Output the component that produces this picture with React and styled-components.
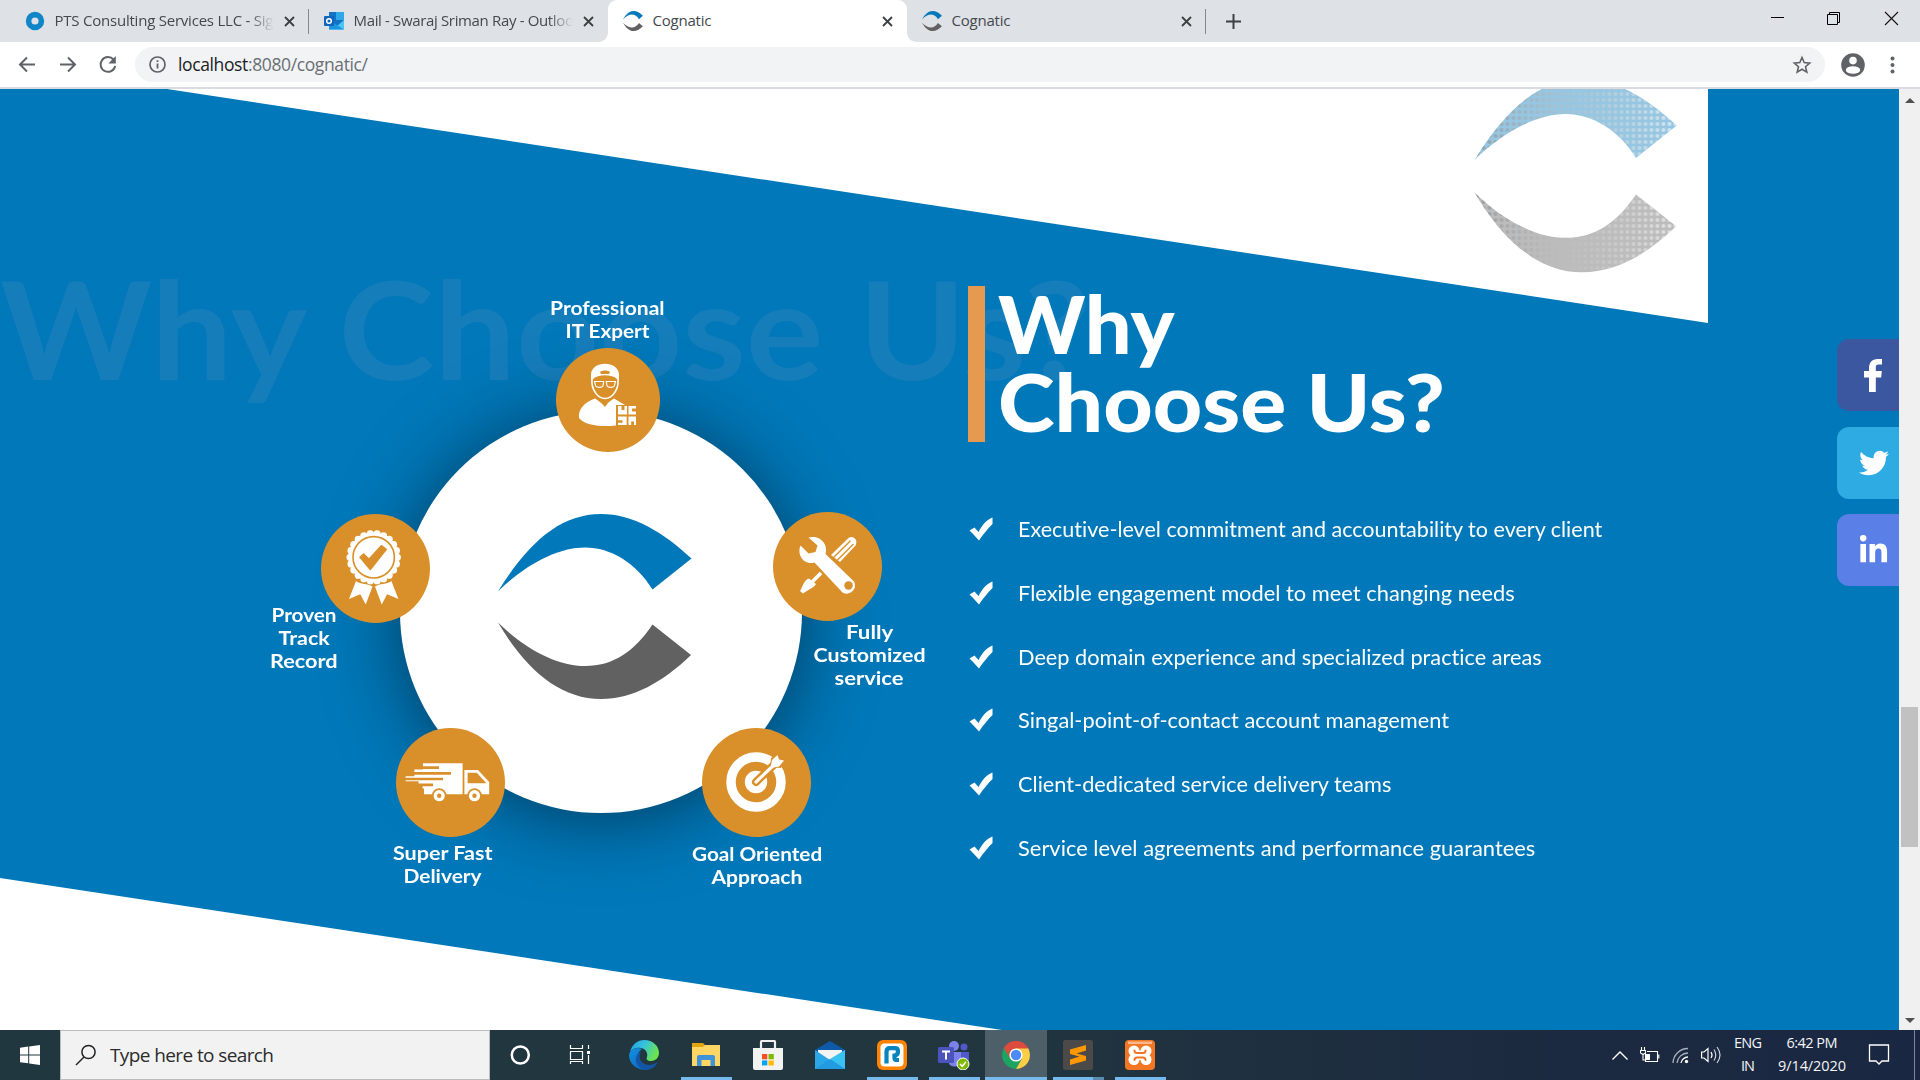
import React, { useLayoutEffect, useRef, useState } from 'react';
import styled, { createGlobalStyle } from 'styled-components';
import { FaTwitter, FaLinkedinIn } from 'react-icons/fa';

const UI = '"Open Sans", "Noto Sans", sans-serif';
const BRAND = 'Lato, "Open Sans", sans-serif';
const BLUE = '#0078b9';
const ORANGE = '#d9902a';

const Global = createGlobalStyle`
  * { box-sizing: border-box; }
  html, body { margin: 0; overflow: hidden; background: #fff; }
  svg { display: block; flex: none; }
`;

/* ---------- text set to a given measure ---------- */
const Line = styled.span`
  display: inline-block;
  white-space: nowrap;
`;

function Fit({ w, children }) {
  const ref = useRef(null);
  const [spacing, setSpacing] = useState(0);
  useLayoutEffect(() => {
    const natural = ref.current.getBoundingClientRect().width;
    setSpacing((w - natural) / (ref.current.textContent.length - 1));
  }, [w]);
  return (
    <Line ref={ref} style={{ letterSpacing: spacing, marginRight: -spacing }}>
      {children}
    </Line>
  );
}

/* brand lettering is drawn extended: the glyphs widen, not the gaps */
const WideLine = styled(Line)`
  transform-origin: ${(p) => (p.$centered ? '50%' : '0')} 50%;
  font-variant-ligatures: none;
`;

function Wide({ w, centered, children }) {
  const ref = useRef(null);
  const [scale, setScale] = useState(1);
  useLayoutEffect(() => {
    setScale(w / ref.current.offsetWidth);
  }, [w]);
  return (
    <WideLine ref={ref} $centered={centered} style={{ transform: `scaleX(${scale})` }}>
      {children}
    </WideLine>
  );
}

/* ---------- shell ---------- */
const Screen = styled.div`
  width: 1920px;
  height: 1080px;
  display: flex;
  flex-direction: column;
  overflow: hidden;
  font-family: ${UI};
`;

/* ---------- tab strip ---------- */
const TabStrip = styled.div`
  height: 42px;
  flex: none;
  display: flex;
  padding-left: 10px;
  background: #dee1e6;
`;

const Tab = styled.div`
  position: relative;
  width: 299px;
  height: 42px;
  display: flex;
  align-items: center;
  padding: 0 14px 0 15px;
  border-radius: 9px 9px 0 0;
  background: ${(p) => (p.$active ? '#fff' : 'transparent')};
  &::before, &::after {
    content: '';
    display: ${(p) => (p.$active ? 'block' : 'none')};
    position: absolute;
    bottom: 0;
    width: 9px;
    height: 9px;
  }
  &::before { left: -9px; background: radial-gradient(circle at 0 0, transparent 8.5px, #fff 9px); }
  &::after { right: -9px; background: radial-gradient(circle at 100% 0, transparent 8.5px, #fff 9px); }
`;

const TabTitle = styled.div`
  flex: 1;
  height: 24px;
  margin: 0 8px 0 9.5px;
  line-height: 23px;
  font-size: 15px;
  color: #45494d;
  overflow: hidden;
  white-space: nowrap;
  ${(p) => p.$fade && 'mask-image: linear-gradient(90deg, #000 88%, transparent 99%);'}
`;

const TabDivider = styled.div`
  width: 1px;
  height: 25px;
  margin: 9px 0 0 -1px;
  background: #85888c;
`;

const NewTab = styled.div`
  margin: 14px 0 0 20px;
`;

const WindowControls = styled.div`
  display: flex;
  gap: 42px;
  margin: 11px 21px 0 auto;
`;

/* ---------- toolbar ---------- */
const Toolbar = styled.div`
  height: 47px;
  flex: none;
  display: flex;
  align-items: center;
  padding: 0 21px 0 17px;
  background: #fff;
  border-bottom: 2px solid #d9dbe1;
`;

const NavButtons = styled.div`
  display: flex;
  gap: 19px;
  width: 118px;
`;

const Omnibox = styled.div`
  width: 1690px;
  height: 35px;
  display: flex;
  align-items: center;
  padding: 0 13px 0 13px;
  border-radius: 18px;
  background: #f1f3f4;
`;

const Address = styled.div`
  flex: 1;
  margin-left: 11px;
  font-size: 17.5px;
  line-height: 33px;
  padding-bottom: 1px;
  color: #202124;
`;

const AddressRest = styled.span`
  color: #6b6f74;
`;

const ToolbarEnd = styled.div`
  display: flex;
  align-items: center;
  gap: 25.5px;
  margin-left: 15.5px;
`;

/* ---------- page ---------- */
const Viewport = styled.div`
  height: 941px;
  flex: none;
  display: flex;
`;

const Page = styled.main`
  position: relative;
  width: 1899px;
  height: 941px;
  display: flex;
  overflow: hidden;
  background: ${BLUE};
  font-family: ${BRAND};
  color: #fff;
`;

const Backdrop = styled.svg`
  position: absolute;
  left: 0;
  top: 0;
`;

const Watermark = styled.div`
  position: absolute;
  left: 0;
  top: 159px;
  font-size: 136px;
  font-weight: 700;
  line-height: 160px;
  color: #167dbb;
`;

const Diagram = styled.div`
  position: relative;
  width: 968px;
  flex: none;
`;

const Ring = styled.div`
  position: absolute;
  left: 400px;
  top: 322px;
  width: 402px;
  height: 402px;
  display: flex;
  padding: 102.5px 0 0 98px;
  border-radius: 50%;
  background: #fff;
  box-shadow: 0 6px 74px rgba(0, 0, 0, 0.5);
`;

const Node = styled.div`
  position: absolute;
  left: ${(p) => p.$x}px;
  top: ${(p) => p.$y}px;
  width: ${(p) => p.$size}px;
  height: ${(p) => p.$size}px;
  border-radius: 50%;
  background: ${ORANGE};
`;

const NodeLabel = styled.div`
  position: absolute;
  left: ${(p) => p.$cx - 80}px;
  top: ${(p) => p.$y}px;
  width: 160px;
  display: flex;
  flex-direction: column;
  align-items: center;
  font-size: 18.5px;
  font-weight: 700;
  line-height: 23.3px;
`;

const Content = styled.div`
  position: relative;
  padding-top: 197px;
`;

const Heading = styled.h1`
  display: flex;
  height: 156px;
  margin: 0;
  padding-left: 13px;
  border-left: 17px solid #e69a50;
  font-size: 80px;
  font-weight: 900;
  line-height: 78px;
`;

const HeadingText = styled.div`
  display: flex;
  flex-direction: column;
  align-items: flex-start;
  margin-top: -2px;
`;

const Points = styled.ul`
  margin: 55.5px 0 0;
  padding: 0;
  list-style: none;
`;

const Point = styled.li`
  height: 63.65px;
  display: flex;
  align-items: center;
  gap: 25px;
  padding-left: 1px;
  font-size: 20.5px;
  line-height: 24px;
`;

const Socials = styled.div`
  position: absolute;
  right: 0;
  top: 250px;
  display: flex;
  flex-direction: column;
  gap: 15.5px;
`;

const Social = styled.a`
  width: 62px;
  height: 72px;
  display: flex;
  align-items: center;
  justify-content: center;
  padding: 0 0 0 11px;
  border-radius: 12px 0 0 12px;
  background: ${(p) => p.$color};
  color: #fff;
`;

const Scrollbar = styled.div`
  width: 21px;
  height: 941px;
  display: flex;
  flex-direction: column;
  align-items: center;
  justify-content: space-between;
  padding: 9px 0 7px;
  background: #f0f0f0;
`;

const Thumb = styled.div`
  width: 17px;
  height: 140px;
  margin-top: 432px;
  background: #c1c1c1;
`;

/* ---------- taskbar ---------- */
const Taskbar = styled.div`
  height: 50px;
  flex: none;
  display: flex;
  background: linear-gradient(90deg, #21373f 0%, #21363f 50%, #1c2a40 80%, #1a2742 100%);
`;

const StartButton = styled.div`
  width: 60px;
  display: flex;
  align-items: center;
  justify-content: center;
`;

const SearchBox = styled.div`
  width: 430px;
  display: flex;
  align-items: center;
  gap: 13px;
  padding: 0 0 1px 14px;
  border: 1px solid #bcbcbc;
  background: #f2f2f2;
  font-size: 19px;
  color: #2b2b2b;
`;

const TaskItem = styled.div`
  width: ${(p) => p.$w || 62}px;
  display: flex;
  flex-direction: column;
  align-items: center;
  justify-content: space-between;
  padding-top: 10px;
  background: ${(p) => (p.$active ? '#4d5f68' : 'transparent')};
`;

const Running = styled.div`
  width: ${(p) => (p.$full ? 62 : 51)}px;
  height: 3px;
  background: ${(p) => (p.$stacked ? 'linear-gradient(90deg, #76b9ed 79%, #5c8bb2 79%)' : '#76b9ed')};
`;

const Tray = styled.div`
  display: flex;
  align-items: center;
  margin-left: auto;
  color: #f3f5f7;
  font-size: 14.5px;
`;

const TrayIcons = styled.div`
  display: flex;
  align-items: center;
  gap: 12px;
`;

const TrayText = styled.div`
  display: flex;
  flex-direction: column;
  align-items: center;
  width: ${(p) => p.$w}px;
  line-height: 22.6px;
`;

const Peek = styled.div`
  width: 6px;
  height: 50px;
  margin-left: 24px;
  border-left: 1px solid #7d8590;
`;

/* ---------- drawings ---------- */
const TOP_ARC = 'M0 77.5C30 29 62 0 103 0C135 0 165 18 193.5 44.5L154.5 75.5C138 49 113 33.5 87 33.5C60 33.5 28 50 0 77.5Z';
const LOW_ARC = 'M0 108.5C28 136 60 152 87 152C115 152 136 138 154.5 110.5L193 141C165 168 135 185 103 185C62 185 28 156 0 108.5Z';

const Logo = ({ w = 194, h = 185 }) => (
  <svg width={w} height={h} viewBox="0 0 194 185" preserveAspectRatio="none">
    <path d={TOP_ARC} fill="#0078b9" />
    <path d={LOW_ARC} fill="#616161" />
  </svg>
);

const Close = () => (
  <svg width="11" height="11" viewBox="0 0 11 11">
    <path d="M1 1l9 9M10 1l-9 9" stroke="#3c4043" strokeWidth="1.8" />
  </svg>
);

const PtsIcon = () => (
  <svg width="20" height="20" viewBox="0 0 20 20">
    <circle cx="10" cy="10" r="6.4" fill="none" stroke="#0e86c7" strokeWidth="5.6" />
  </svg>
);

const OutlookIcon = () => (
  <svg width="20" height="20" viewBox="0 0 20 20">
    <path d="M5 1h15v17H5z" fill="#1272c4" />
    <path d="M12 1h8v8h-8z" fill="#2fa7e8" />
    <path d="M5 9l8 6 7-6v9.5H5z" fill="#48c6f4" />
    <path d="M5 9l15 9.5H5z" fill="#1b95df" />
    <rect x="0" y="5" width="10" height="10" rx="1" fill="#0f67bd" />
    <circle cx="5" cy="10" r="2.3" fill="none" stroke="#fff" strokeWidth="1.5" />
  </svg>
);

const FacebookIcon = () => (
  <svg width="20" height="33" viewBox="0 0 20 33">
    <path d="M5 33V18.500H0V12H5V9.500C5 3.500 8 0 13.500 0H18V5.500H14.500C12.300 5.500 11.800 6.500 11.800 8.500V12H17.800L17.200 18.500H11.800V33Z" fill="#fff" />
  </svg>
);

const WorkerIcon = () => (
  <svg width="104" height="104" viewBox="0 0 104 104">
    <path d="M35 33V27C35 12 63 12 63 27V33L61 31C56 26 42 26 37 31Z" fill="#fff" />
    <path d="M44 24c2-2 8-2 10 0l-1 2h-8z" fill={ORANGE} />
    <path d="M36 31C35 42 42 50.5 49 50.5S63 42 62 31" fill="none" stroke="#fff" strokeWidth="1.6" />
    <path d="M38.5 33.5h9.2l-.8 4.5c-1 1.8-6 1.8-7.2 0zM50.3 33.5h9.2l-1.2 4.5c-1.200 1.800-6.200 1.800-7.200 0z" fill="none" stroke="#fff" strokeWidth="1.1" />
    <path d="M39 50.500C42 52 45 55 48.500 58C52 55 55 52 58 50.500C62 53 66 55 69 57H60V77.500C47 79 29 78 23 70C22 62 27 55 39 50.500Z" fill="#fff" />
    <path d="M48 53.500h1.500l2 2-2.600 3.500-2.600-3.500z" fill={ORANGE} />
    <path d="M62 58h3.500v4h3v-4h2.500v8.500h-9zM72.500 58H80v2.500h-4v3h4v3h-7.500zM62 68.500h8.700V77H62v-2.300h4.500v-2.500H62zM72.500 68.500H80V77h-2v-3.500h-2.800V77h-2.700z" fill="#fff" />
  </svg>
);

const scallop = Array.from({ length: 22 }, (_, i) => {
  const a = (i / 22) * Math.PI * 2;
  return [52.7 + Math.cos(a) * 23.6, 43.3 + Math.sin(a) * 23.6];
});

const BadgeIcon = () => (
  <svg width="109" height="109" viewBox="0 0 109 109">
    <path d="M35 67C40 71 46 69 51.500 72.500L44.700 90.500L39.300 80.300L28 85ZM70.400 67C65.400 71 59.400 69 54 72.500L60.700 90.500L66.100 80.300L77.400 85Z" fill="#fff" />
    <g fill="#fff">
      {scallop.map(([x, y], i) => <circle key={i} cx={x} cy={y} r="3.6" />)}
      <circle cx="52.7" cy="43.300" r="24.500" />
    </g>
    <circle cx="52.700" cy="43.300" r="20.700" fill="none" stroke={ORANGE} strokeWidth="1.600" />
    <path d="M39 43.300L42.700 40L48 45.300L60.300 31.700L65.300 35.300L49.300 55.500Z" fill={ORANGE} stroke={ORANGE} strokeWidth="1.500" strokeLinejoin="round" />
  </svg>
);

const ToolsIcon = () => (
  <svg width="109" height="109" viewBox="0 0 109 109">
    <path d="M58 43L75.500 26C80 23 85.500 28 82.500 33.500L67 50Z" fill="#fff" />
    <path d="M60.500 45.500L77.500 28.800M64 48.500L80.500 32" stroke={ORANGE} strokeWidth="1.300" />
    <path d="M48 61L38 71" stroke="#fff" strokeWidth="3.600" />
    <path d="M36 66.500L43 72C41 76 36 77 30 81.500L27 79C29.500 75 31 68 36 66.500Z" fill="#fff" />
    <path d="M35.500 25.500C46 22.500 55.500 31 52.500 42L81 69.500A8.300 8.300 0 0 1 69.500 80.500L41.500 50.500C31 53.500 23.500 43 27.500 33.500L35.500 41.500L42.500 40L44.500 33.500Z" fill="#fff" />
    <circle cx="75.500" cy="73.500" r="4.200" fill={ORANGE} />
  </svg>
);

const TruckIcon = () => (
  <svg width="109" height="109" viewBox="0 0 109 109">
    <path d="M27 35.300H66.600V66.300H28V60.500H26.600V58H22.500V53.300H9.600V48.200H18.400V41.500H27Z" fill="#fff" />
    <path d="M14 39.600H43M8 45.300H55M8 51H47M14 56.800H37" stroke={ORANGE} strokeWidth="2.700" />
    <path d="M8 54.500h14v4H8z" fill={ORANGE} />
    <path d="M68.400 42H82L93.200 54V66.300H68.400Z" fill="#fff" />
    <path d="M71.600 44.700H80.800L90.400 55.300H71.600Z" fill={ORANGE} />
    {[43.200, 78.500].map((x) => (
      <g key={x}>
        <circle cx={x} cy="67.700" r="7.400" fill={ORANGE} />
        <circle cx={x} cy="67.700" r="5.600" fill="#fff" />
        <circle cx={x} cy="67.700" r="2.200" fill={ORANGE} />
      </g>
    ))}
  </svg>
);

const TargetIcon = () => (
  <svg width="109" height="109" viewBox="0 0 109 109">
    <circle cx="54" cy="54" r="25" fill="none" stroke="#fff" strokeWidth="9.500" />
    <circle cx="54" cy="54" r="11.200" fill="#fff" />
    <path d="M54 54L79 30" stroke={ORANGE} strokeWidth="8" strokeLinecap="round" />
    <path d="M68 39L69 30L76 25.500L83 32L79 40Z" fill={ORANGE} />
    <path d="M54 54L76 33" stroke="#fff" strokeWidth="3.200" strokeLinecap="round" />
    <path d="M69 37L70 32L75.500 27L77 31.500L82 32.500L77 38.500L71.500 39.500Z" fill="#fff" />
  </svg>
);

const Tick = () => (
  <svg width="24" height="24" viewBox="0 0 24 24">
    <path d="M0.500 13.500L5.500 10.500L9.500 15C13 8 17.500 3 23.500 0.500V7C18.500 12 14 17.500 10 23.500C7 20 4 17 0.500 13.500Z" fill="#fff" />
  </svg>
);

const Arrow = ({ flip }) => (
  <svg width="21" height="21" viewBox="0 0 21 21">
    <path d={flip ? 'M3 10.500H18M11 3.500L18 10.500L11 17.500' : 'M18 10.500H3M10 3.500L3 10.500L10 17.500'} fill="none" stroke="#5f6368" strokeWidth="2" />
  </svg>
);

/* ---------- data ---------- */
const nodes = [
  { x: 555.7, y: 258.7, size: 104, Icon: WorkerIcon },
  { x: 321.2, y: 424.7, size: 109, Icon: BadgeIcon },
  { x: 772.6, y: 423.4, size: 109, Icon: ToolsIcon },
  { x: 395.6, y: 639, size: 109, Icon: TruckIcon },
  { x: 702, y: 639, size: 109, Icon: TargetIcon },
];

const labels = [
  { cx: 607.5, y: 207.5, lines: [['Professional', 115], ['IT Expert', 84]] },
  { cx: 304, y: 514.5, lines: [['Proven', 65], ['Track', 51], ['Record', 68]] },
  { cx: 869.5, y: 531.5, lines: [['Fully', 47], ['Customized', 112], ['service', 69]] },
  { cx: 442.5, y: 753, lines: [['Super Fast', 99], ['Delivery', 78]] },
  { cx: 757, y: 754, lines: [['Goal Oriented', 130], ['Approach', 91]] },
];

const points = [
  ['Executive-level commitment and accountability to every client', 584],
  ['Flexible engagement model to meet changing needs', 497],
  ['Deep domain experience and specialized practice areas', 524],
  ['Singal-point-of-contact account management', 431],
  ['Client-dedicated service delivery teams', 373],
  ['Service level agreements and performance guarantees', 517],
];

const taskApps = [
  {
    icon: (
      <svg width="30" height="30" viewBox="0 0 30 30">
        <defs>
          <linearGradient id="eg" x1="0" x2="1" y1="0" y2=".4"><stop offset="0" stopColor="#1e9de0" /><stop offset=".5" stopColor="#35c3df" /><stop offset="1" stopColor="#6be34f" /></linearGradient>
          <linearGradient id="eb" x1="0" x2=".8" y1="0" y2="1"><stop offset="0" stopColor="#1591e0" /><stop offset="1" stopColor="#0a66bd" /></linearGradient>
        </defs>
        <path d="M1 12C3 4 9 0 15 0C24 0 30 6 30 13C30 18 26 21 22 21C18 21 17 19 18 17C19 13 17 9 12 8C7 7 3 9 1 12Z" fill="url(#eg)" />
        <path d="M1 12C4 8 9 7 13 9C10 11 8 15 9 19C10 24 14 28 20 29C10 32 0 25 0 15Z" fill="url(#eb)" />
        <path d="M12 12C9 16 11 24 19 25C23 25 27 23 29 22C26 28 21 30 17 30C11 29 6 24 7 18C7.500 15 9 13 12 12Z" fill="#1354a3" />
      </svg>
    ),
  },
  {
    run: true,
    icon: (
      <svg width="28" height="28" viewBox="0 0 28 28">
        <path d="M0 3H11L14 6H28V26H0Z" fill="#e2a512" />
        <path d="M0 7H11L13 5H28V26H0Z" fill="#ffd664" />
        <path d="M5 26V17Q5 15 7 15H21Q23 15 23 17V26H18.500V20H9.500V26Z" fill="#3f93d8" />
      </svg>
    ),
  },
  {
    icon: (
      <svg width="30" height="30" viewBox="0 0 30 30">
        <path d="M8 9V2Q8 1 9 1H21Q22 1 22 2V9" fill="none" stroke="#f0f0f0" strokeWidth="2.200" />
        <path d="M0 8H30V28Q30 30 28 30H2Q0 30 0 28Z" fill="#f2f2f2" />
        <path d="M9 14h5.300v5.300H9z" fill="#f25022" /><path d="M15.500 14h5.300v5.300h-5.300z" fill="#7fba00" />
        <path d="M9 20.400h5.300v5H9z" fill="#00a4ef" /><path d="M15.500 20.400h5.300v5h-5.300z" fill="#ffb900" />
      </svg>
    ),
  },
  {
    icon: (
      <svg width="30" height="30" viewBox="0 0 30 30">
        <path d="M0 10L15 1L30 10V14H0Z" fill="#0d5aa9" />
        <path d="M3 10H27V20H3Z" fill="#f4f4f4" />
        <path d="M0 10L15 20L30 10V29H0Z" fill="#2ba6e6" />
        <path d="M15 19L30 10V29Z" fill="#38c3f3" /><path d="M0 29L15 19L30 29Z" fill="#229be0" />
      </svg>
    ),
  },
  {
    run: true,
    icon: (
      <svg width="30" height="30" viewBox="0 0 30 30">
        <rect width="30" height="30" rx="6" fill="#ff8200" />
        <rect x="3.500" y="3.500" width="23" height="23" rx="4" fill="#fff" />
        <path d="M9.500 23.500V12Q9.500 8.200 13 8.200H18Q21 8.200 21 11.500Q21 15 17.500 15.500V18Q17.500 19.500 19 20H22" fill="none" stroke="#0684bd" strokeWidth="4.200" />
      </svg>
    ),
  },
  {
    run: true,
    icon: (
      <svg width="32" height="30" viewBox="0 0 32 30">
        <circle cx="16" cy="6" r="5" fill="#7b83eb" /><circle cx="26" cy="7" r="3.500" fill="#5059c9" />
        <path d="M11 12H23V22A7 7 0 0 1 11 24Z" fill="#7b83eb" /><path d="M23 12H31V20A5 5 0 0 1 23 22Z" fill="#5059c9" />
        <rect x="0" y="7" width="16" height="16" rx="1.500" fill="#4b53bc" />
        <path d="M4 11.500H12M8 11.500V19.500" stroke="#fff" strokeWidth="2" />
        <circle cx="25" cy="24" r="6" fill="#7fba00" stroke="#fff" />
        <path d="M22 24L24.300 26.300L28 21.800" fill="none" stroke="#fff" strokeWidth="1.600" />
      </svg>
    ),
  },
  {
    run: true,
    active: true,
    icon: (
      <svg width="28" height="30" viewBox="0 0 28 30">
        <path d="M14 15L1.900 8A14 14 0 0 1 26.100 8Z" fill="#dd4b3e" />
        <path d="M14 15L1.900 8A14 14 0 0 0 14 29L20 18.500Z" fill="#1da362" />
        <path d="M14 15V8H26.100A14 14 0 0 1 14 29L20 18.500Z" fill="#ffce44" />
        <path d="M7 8.500H26.400A14 14 0 0 0 1.900 8L8 18.500Z" fill="#dd4b3e" />
        <circle cx="14" cy="15" r="6.600" fill="#fff" /><circle cx="14" cy="15" r="5.200" fill="#4c8bf5" />
      </svg>
    ),
  },
  {
    run: true,
    stacked: true,
    icon: (
      <svg width="30" height="30" viewBox="0 0 30 30">
        <rect width="30" height="30" rx="2.500" fill="#4b4a49" />
        <path d="M7 9.500L23 5V10.500L13.500 13.500L23 16V20.500L7 25V19.500L16.500 16.500L7 14Z" fill="#ff9800" />
      </svg>
    ),
  },
  {
    run: true,
    icon: (
      <svg width="30" height="30" viewBox="0 0 30 30">
        <rect width="30" height="30" rx="4" fill="#f37623" />
        <path d="M3 1.500H27V4H3Z" fill="#f9b98c" />
        <g fill="#fff">
          <circle cx="9" cy="11" r="5.500" /><circle cx="21" cy="11" r="5.500" />
          <circle cx="9" cy="19.500" r="5.500" /><circle cx="21" cy="19.500" r="5.500" />
          <path d="M9 10.500H21V20H9Z" />
        </g>
        <path d="M9.500 10.500Q9.500 13 12 13H18Q20.500 13 20.500 10.500M9.500 20Q9.500 17.500 12 17.500H18Q20.500 17.500 20.500 20" fill="none" stroke="#f37623" strokeWidth="2" strokeLinecap="round" />
        <path d="M13.500 5.500L15 8L16.500 5.500ZM13.500 25L15 22.500L16.500 25Z" fill="#f37623" />
      </svg>
    ),
  },
];

export default function App() {
  return (
    <Screen>
      <Global />
      <TabStrip>
        <Tab>
          <PtsIcon />
          <TabTitle $fade><Fit w={228}>PTS Consulting Services LLC - Sign</Fit></TabTitle>
          <Close />
        </Tab>
        <TabDivider />
        <Tab>
          <OutlookIcon />
          <TabTitle $fade><Fit w={228}>Mail - Swaraj Sriman Ray - Outlook</Fit></TabTitle>
          <Close />
        </Tab>
        <Tab $active>
          <Logo w={20} h={20} />
          <TabTitle><Fit w={59}>Cognatic</Fit></TabTitle>
          <Close />
        </Tab>
        <Tab>
          <Logo w={20} h={20} />
          <TabTitle><Fit w={59}>Cognatic</Fit></TabTitle>
          <Close />
        </Tab>
        <TabDivider />
        <NewTab>
          <svg width="15" height="15" viewBox="0 0 15 15"><path d="M7.500 0V15M0 7.500H15" stroke="#3c4043" strokeWidth="2" /></svg>
        </NewTab>
        <WindowControls>
          <svg width="14" height="14" viewBox="0 0 14 14"><path d="M0 6.500H13" stroke="#000" /></svg>
          <svg width="15" height="15" viewBox="0 0 15 15"><path d="M.5 3.500H10.500V13.500H.5ZM2.500 3.500V1.500H12.500V11.500H10.500" fill="none" stroke="#000" /></svg>
          <svg width="15" height="15" viewBox="0 0 15 15"><path d="M1 1L14 14M14 1L1 14" stroke="#111" strokeWidth="1.100" /></svg>
        </WindowControls>
      </TabStrip>

      <Toolbar>
        <NavButtons>
          <Arrow />
          <Arrow flip />
          <svg width="21" height="21" viewBox="0 0 21 21">
            <path d="M16.500 5.500A7.400 7.400 0 1 0 18.200 12" fill="none" stroke="#5f6368" strokeWidth="2" />
            <path d="M18.800 2V9.500H11.300Z" fill="#5f6368" />
          </svg>
        </NavButtons>
        <Omnibox>
          <svg width="19" height="19" viewBox="0 0 19 19">
            <circle cx="9.500" cy="9.500" r="7.500" fill="none" stroke="#5f6368" strokeWidth="1.700" />
            <path d="M9.500 8.500V13.500M9.500 5.200V7" stroke="#5f6368" strokeWidth="1.800" />
          </svg>
          <Address><Fit w={190}>localhost<AddressRest>:8080/cognatic/</AddressRest></Fit></Address>
          <svg width="20" height="20" viewBox="0 0 20 20">
            <path d="M10 2.500L12.200 7.600L17.700 8.100L13.500 11.700L14.800 17.100L10 14.200L5.200 17.100L6.500 11.700L2.300 8.100L7.800 7.600Z" fill="none" stroke="#5f6368" strokeWidth="1.600" />
          </svg>
        </Omnibox>
        <ToolbarEnd>
          <svg width="24" height="24" viewBox="0 0 24 24">
            <circle cx="12" cy="12" r="11.800" fill="#5f6368" />
            <circle cx="12" cy="7.600" r="3.800" fill="#fff" />
            <ellipse cx="12" cy="17" rx="7.200" ry="3.800" fill="#fff" />
          </svg>
          <svg width="5" height="18" viewBox="0 0 5 18">
            {[2.500, 9, 15.500].map((y) => <circle key={y} cx="2.500" cy={y} r="2" fill="#5f6368" />)}
          </svg>
        </ToolbarEnd>
      </Toolbar>

      <Viewport>
        <Page>
          <Backdrop width="1899" height="941" viewBox="0 0 1899 941">
            <defs>
              <pattern id="dot" width="5.740" height="5.740" patternUnits="userSpaceOnUse"><circle cx="2.870" cy="2.870" r="1.900" fill="#fff" /></pattern>
              <mask id="dots"><rect width="194" height="186" fill="url(#dot)" /></mask>
              <linearGradient id="tone" x1="0" x2="1" y1="0" y2="0">
                <stop offset="0" stopColor="#8c8f94" stopOpacity=".75" />
                <stop offset=".5" stopColor="#c4c4c4" stopOpacity=".35" />
                <stop offset="1" stopColor="#fff" stopOpacity=".6" />
              </linearGradient>
            </defs>
            <path d="M167 0L1708 234V0Z" fill="#fff" />
            <path d="M0 789L1002 941H0Z" fill="#fff" />
            <g transform="translate(1474.500 -10) scale(1.045)">
              <path d={TOP_ARC} fill="#96c6e1" />
              <path d={LOW_ARC} fill="#bcbcbc" />
              <path d={TOP_ARC} fill="url(#tone)" mask="url(#dots)" />
              <path d={LOW_ARC} fill="url(#tone)" mask="url(#dots)" />
            </g>
          </Backdrop>
          <Watermark><Wide w={1091}>Why Choose Us?</Wide></Watermark>

          <Diagram>
            <Ring><Logo /></Ring>
            {nodes.map(({ x, y, size, Icon }) => (
              <Node key={x} $x={x} $y={y} $size={size}><Icon /></Node>
            ))}
            {labels.map(({ cx, y, lines }) => (
              <NodeLabel key={cx} $cx={cx} $y={y}>
                {lines.map(([text, w]) => <Wide key={text} w={w} centered>{text}</Wide>)}
              </NodeLabel>
            ))}
          </Diagram>

          <Content>
            <Heading>
              <HeadingText>
                <Wide w={177}>Why</Wide>
                <Wide w={447}>Choose Us?</Wide>
              </HeadingText>
            </Heading>
            <Points>
              {points.map(([text, w]) => (
                <Point key={text}><Tick /><Wide w={w}>{text}</Wide></Point>
              ))}
            </Points>
          </Content>

          <Socials>
            <Social $color="#3b57a0"><FacebookIcon /></Social>
            <Social $color="#2eabe2"><FaTwitter size={30} /></Social>
            <Social $color="#5a7fe6"><FaLinkedinIn size={31} /></Social>
          </Socials>
        </Page>
        <Scrollbar>
          <svg width="10" height="5" viewBox="0 0 10 5"><path d="M0 5L5 0L10 5Z" fill="#505050" /></svg>
          <Thumb />
          <svg width="10" height="5" viewBox="0 0 10 5"><path d="M0 0L5 5L10 0Z" fill="#505050" /></svg>
        </Scrollbar>
      </Viewport>

      <Taskbar>
        <StartButton>
          <svg width="20" height="20" viewBox="0 0 20 20">
            <path d="M0 2.800L8.200 1.600V9.400H0ZM9.200 1.500L20 0V9.400H9.200ZM0 10.400H8.200V18.300L0 17.200ZM9.200 10.400H20V20L9.200 18.500Z" fill="#fff" />
          </svg>
        </StartButton>
        <SearchBox>
          <svg width="22" height="22" viewBox="0 0 22 22">
            <circle cx="13.500" cy="8" r="6.600" fill="none" stroke="#222" strokeWidth="1.500" />
            <path d="M9 13L1 21" stroke="#222" strokeWidth="1.500" />
          </svg>
          <Fit w={164}>Type here to search</Fit>
        </SearchBox>
        <TaskItem $w={61}>
          <svg width="30" height="30" viewBox="0 0 30 30"><circle cx="14.300" cy="15" r="8.500" fill="none" stroke="#fff" strokeWidth="2.500" /></svg>
        </TaskItem>
        <TaskItem>
          <svg width="30" height="30" viewBox="0 0 30 30">
            <path d="M3.500 5V8.500H15.500V5M3.500 11.500H15.500V19.500H3.500ZM3.500 24V21.500H15.500V24M21.500 5V9M21.500 15V24" fill="none" stroke="#fff" strokeWidth="1.200" />
            <path d="M20 11h3v3h-3z" fill="#fff" />
          </svg>
        </TaskItem>
        {taskApps.map((app, i) => (
          <TaskItem key={i} $active={app.active}>
            {app.icon}
            {app.run && <Running $full={app.active} $stacked={app.stacked} />}
          </TaskItem>
        ))}
        <Tray>
          <TrayIcons>
            <svg width="16" height="9" viewBox="0 0 16 9"><path d="M.5 8.500L8 1L15.500 8.500" fill="none" stroke="#fff" strokeWidth="1.400" /></svg>
            <svg width="20" height="16" viewBox="0 0 20 16">
              <path d="M5.500 5V14.500H17.500V4.500H7M18.800 7.500V11.500M1.500 0V3M4.500 0V3M.5 3.500H5.500V6L3 7.500L.5 6ZM3 7.500V13H5" fill="none" stroke="#fff" strokeWidth="1.100" />
              <path d="M5 7h5v6H5z" fill="#fff" />
            </svg>
            <svg width="17" height="17" viewBox="0 0 17 17">
              <path d="M1 16A15 15 0 0 1 16 1.500M5 16A11 11 0 0 1 16 6" fill="none" stroke="#a9b0ba" strokeWidth="1.300" />
              <path d="M9 16A7 7 0 0 1 16 10" fill="none" stroke="#fff" strokeWidth="1.300" />
              <circle cx="14.500" cy="14.500" r="1.700" fill="#fff" />
            </svg>
            <svg width="21" height="18" viewBox="0 0 21 18">
              <path d="M.6 6H3L7 2.500V15.500L3 12H.6ZM10 6Q12 9 10 12" fill="none" stroke="#fff" strokeWidth="1.200" />
              <path d="M13 3.500Q16.500 9 13 14.500M16 1Q22 9 16 17" fill="none" stroke="#cfd3d9" strokeWidth="1.200" />
            </svg>
          </TrayIcons>
          <TrayText $w={52}><Fit w={28}>ENG</Fit><Fit w={14}>IN</Fit></TrayText>
          <TrayText $w={76}><Fit w={51}>6:42 PM</Fit><Fit w={68}>9/14/2020</Fit></TrayText>
          <svg width="40" height="22" viewBox="-19 0 40 22"><path d="M.5 1H19.500V17H13L10 20L7 17H.5Z" fill="none" stroke="#fff" strokeWidth="1.300" /></svg>
          <Peek />
        </Tray>
      </Taskbar>
    </Screen>
  );
}
